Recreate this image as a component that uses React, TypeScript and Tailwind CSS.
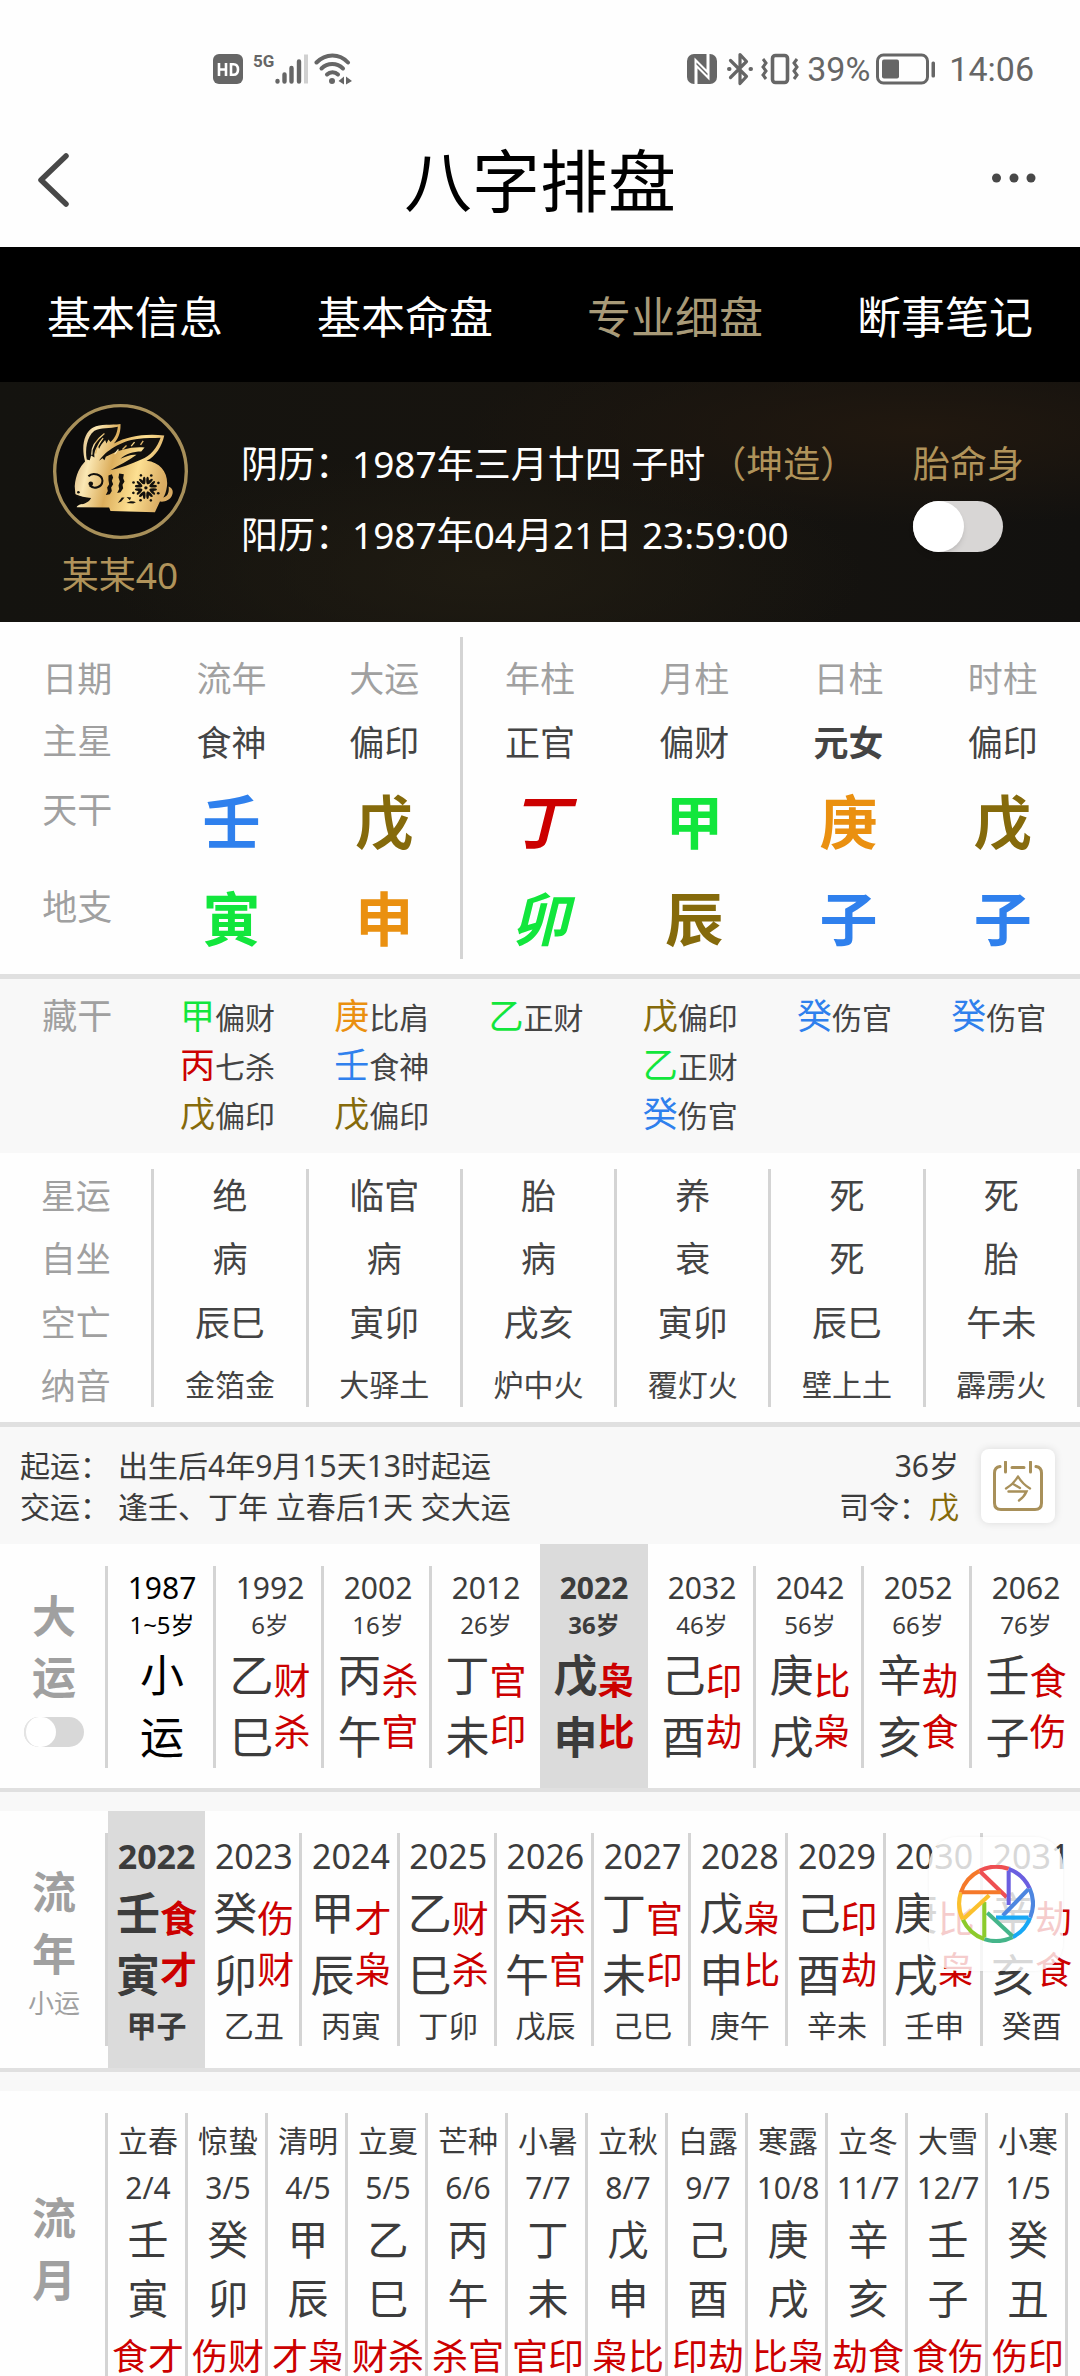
import React, { useState } from "react";

const BLUE = "text-[#2f80ed]";
const GREEN = "text-[#12e63c]";
const BROWN = "text-[#856a0b]";
const ORANGE = "text-[#ea9010]";
const RED = "text-[#cc0000]";

type Glyph = { c: string; color: string; italic?: boolean };

const pillars = ["流年", "大运", "年柱", "月柱", "日柱", "时柱"];
const mainStars = ["食神", "偏印", "正官", "偏财", "元女", "偏印"];
const stems: Glyph[] = [
  { c: "壬", color: BLUE },
  { c: "戊", color: BROWN },
  { c: "丁", color: RED, italic: true },
  { c: "甲", color: GREEN },
  { c: "庚", color: ORANGE },
  { c: "戊", color: BROWN },
];
const branches: Glyph[] = [
  { c: "寅", color: GREEN },
  { c: "申", color: ORANGE },
  { c: "卯", color: GREEN, italic: true },
  { c: "辰", color: BROWN },
  { c: "子", color: BLUE },
  { c: "子", color: BLUE },
];
const hidden: [string, string, string][][] = [
  [["甲", GREEN, "偏财"], ["丙", RED, "七杀"], ["戊", BROWN, "偏印"]],
  [["庚", ORANGE, "比肩"], ["壬", BLUE, "食神"], ["戊", BROWN, "偏印"]],
  [["乙", GREEN, "正财"]],
  [["戊", BROWN, "偏印"], ["乙", GREEN, "正财"], ["癸", BLUE, "伤官"]],
  [["癸", BLUE, "伤官"]],
  [["癸", BLUE, "伤官"]],
];
const details = [
  { label: "星运", cells: ["绝", "临官", "胎", "养", "死", "死"], cls: "h-[58px] pb-[5px] text-[35px]" },
  { label: "自坐", cells: ["病", "病", "病", "衰", "死", "胎"], cls: "h-[63px] text-[35px]" },
  { label: "空亡", cells: ["辰巳", "寅卯", "戌亥", "寅卯", "辰巳", "午未"], cls: "h-[64px] text-[35px]" },
  { label: "纳音", cells: ["金箔金", "大驿土", "炉中火", "覆灯火", "壁上土", "霹雳火"], cls: "h-[53px] pt-[9px] text-[30px]" },
];

const decades = [
  ["1992", "6岁", "乙巳", "财杀"],
  ["2002", "16岁", "丙午", "杀官"],
  ["2012", "26岁", "丁未", "官印"],
  ["2022", "36岁", "戊申", "枭比"],
  ["2032", "46岁", "己酉", "印劫"],
  ["2042", "56岁", "庚戌", "比枭"],
  ["2052", "66岁", "辛亥", "劫食"],
  ["2062", "76岁", "壬子", "食伤"],
];
const years = [
  ["2022", "壬寅", "食才", "甲子"],
  ["2023", "癸卯", "伤财", "乙丑"],
  ["2024", "甲辰", "才枭", "丙寅"],
  ["2025", "乙巳", "财杀", "丁卯"],
  ["2026", "丙午", "杀官", "戊辰"],
  ["2027", "丁未", "官印", "己巳"],
  ["2028", "戊申", "枭比", "庚午"],
  ["2029", "己酉", "印劫", "辛未"],
  ["2030", "庚戌", "比枭", "壬申"],
  ["2031", "辛亥", "劫食", "癸酉"],
];
const months = [
  ["立春", "2/4", "壬", "寅", "食才"],
  ["惊蛰", "3/5", "癸", "卯", "伤财"],
  ["清明", "4/5", "甲", "辰", "才枭"],
  ["立夏", "5/5", "乙", "巳", "财杀"],
  ["芒种", "6/6", "丙", "午", "杀官"],
  ["小暑", "7/7", "丁", "未", "官印"],
  ["立秋", "8/7", "戊", "申", "枭比"],
  ["白露", "9/7", "己", "酉", "印劫"],
  ["寒露", "10/8", "庚", "戌", "比枭"],
  ["立冬", "11/7", "辛", "亥", "劫食"],
  ["大雪", "12/7", "壬", "子", "食伤"],
  ["小寒", "1/5", "癸", "丑", "伤印"],
];

function StatusBar() {
  return (
    <div className="flex h-[120px] items-center justify-between pt-[18px] pr-[46px] pl-[213px] text-[#666]">
      <div className="flex items-center">
        <svg width="30" height="30" viewBox="0 0 30 30" aria-hidden="true">
          <rect width="30" height="30" rx="6" fill="#666" />
          <path d="M6 9v13M13 9v13M6 15.500h7M18 9v13M18 10.200h2.500c3 0 4.500 2 4.500 5.300s-1.500 5.300-4.500 5.300H18" fill="none" stroke="#fff" strokeWidth="2.600" />
        </svg>
        <span className="mb-4 ml-[10px] font-[Roboto] text-[17px] leading-none font-bold">5G</span>
        <svg width="34" height="32" viewBox="0 0 34 32" aria-hidden="true" fill="none" strokeLinecap="round" strokeWidth="4.400">
          <path d="M3.500 28.500v-.5M10.500 28.500v-7M17.500 28.500v-13.500M25 28.500v-20" stroke="#666" />
          <path d="M32 30.500v-29" stroke="#d0d0d0" strokeWidth="4" strokeLinecap="butt" />
        </svg>
        <svg className="ml-1.5" width="38" height="32" viewBox="0 0 38 32" aria-hidden="true" fill="none" stroke="#666" strokeLinecap="round">
          <path d="M2.500 9.500C11.500 0 25.500 0 34 9.500" strokeWidth="4" />
          <path d="M7.500 15.500c6-6 15.500-6 21.500 0" strokeWidth="4" />
          <path d="M13 21.500c3-3 8-3 11 0" strokeWidth="4" />
          <circle cx="18" cy="28" r="3" fill="#666" stroke="none" />
          <path d="M30 23.500l-5.500 4.500 5.500 3.500zM32 23.500l6 4.500-6 3.500z" fill="#666" stroke="none" />
        </svg>
      </div>
      <div className="flex items-center">
        <svg width="30" height="30" viewBox="0 0 30 30" aria-hidden="true">
          <rect width="30" height="30" rx="7" fill="#666" />
          <path d="M8.500 30V6l12 12V0M21.500 0v24L9.500 12v18" fill="none" stroke="#fff" strokeWidth="2" />
        </svg>
        <svg className="ml-[10px]" width="26" height="34" viewBox="0 0 26 34" aria-hidden="true" fill="none" stroke="#666" strokeWidth="3.200" strokeLinecap="round" strokeLinejoin="round">
          <path d="M3.500 8.500l16 16-6.500 7V2.500l6.500 7-16 16" />
          <path d="M2 17h.5M23.500 17h.5" strokeWidth="4" />
        </svg>
        <svg className="ml-2" width="38" height="32" viewBox="0 0 38 32" aria-hidden="true" fill="none" stroke="#666">
          <rect x="11.500" y="2.500" width="15" height="27" rx="3" strokeWidth="3.600" />
          <path d="M2 6l3 4-3 4 3 4-3 4 3 4M36 6l-3 4 3 4-3 4 3 4-3 4" strokeWidth="3" />
        </svg>
        <span className="ml-[8px] font-[Roboto] text-[34px] leading-none">39%</span>
        <svg className="ml-[6px]" width="60" height="32" viewBox="0 0 60 32" aria-hidden="true">
          <rect x="1.500" y="2" width="50" height="28" rx="6" fill="none" stroke="#666" strokeWidth="3" />
          <rect x="6" y="6.500" width="17" height="19" rx="2" fill="#666" />
          <rect x="55.500" y="8.500" width="3.500" height="16" rx="1.500" fill="#666" />
        </svg>
        <span className="ml-[13px] font-[Roboto] text-[34px] leading-none">14:06</span>
      </div>
    </div>
  );
}

function Rabbit() {
  return (
    <svg width="135" height="135" viewBox="66 42 404 404" role="img" aria-label="生肖兔">
      <defs>
        <linearGradient id="gold" x1="0" y1="0" x2="1" y2="0.200">
          <stop offset="0" stopColor="#c9a06a" />
          <stop offset="0.220" stopColor="#fbe8b4" />
          <stop offset="0.450" stopColor="#dcae5c" />
          <stop offset="0.720" stopColor="#fde092" />
          <stop offset="1" stopColor="#d9ab62" />
        </linearGradient>
      </defs>
      <circle cx="268" cy="244" r="197" fill="#0c0b0a" stroke="#a8905a" strokeWidth="10" />
      <path
        d="M131 288C134 254 146 230 162 214C150 170 158 128 186 112C208 101 240 106 268 102C269 126 262 146 248 160C290 138 340 130 399 136C392 168 374 198 346 212C388 216 412 250 407 288C405 304 400 316 396 322C410 318 414 306 412 289C424 294 427 304 422 316C416 330 400 336 386 334L371 366L238 362L234 352L137 351C138 345 148 343 156 340C166 336 176 328 178 323C158 324 142 318 133 312Z"
        fill="url(#gold)"
      />
      <g fill="#12100d">
        <path d="M167 208C162 180 166 140 190 122C208 112 238 116 260 110C258 130 250 146 238 156L232 148L226 160L222 150C214 160 208 166 204 176L200 168C192 178 188 190 190 202L180 196L176 210Z" />
        <path d="M204 212C222 184 270 152 318 147C346 143 368 144 388 143C378 172 358 198 330 208C300 222 268 234 238 240C262 226 292 212 316 194C300 192 286 198 268 206C284 190 306 184 330 184L340 172C306 168 262 178 224 200L220 210L214 204Z" />
        <path d="M131 312C146 318 164 322 180 323C176 332 164 340 152 342Z" />
        <path d="M232 256l10-4 4 10-4 10 4 10-6 10 2 10-6 10-12 2 6-12-2-10 6-10-2-12zM264 250l14 2-2 12 4 10-6 10 2 10-8 12-10 2 6-12-2-10 4-12-4-12z" />
        <path d="M260 338l12-16 8 0-10 12zM286 338c10-6 20-6 28-2l-8 4zM286 320l14 2-4 8z" />
      </g>
      <g fill="none" stroke="url(#gold)" strokeWidth="4">
        <path d="M182 194C180 172 194 150 220 130M194 190C196 172 206 156 216 144" />
        <path d="M250 192l12-14M274 178l12-12M300 168l10-12M328 164l8-12" />
      </g>
      <path d="M172 258C186 244 214 254 214 272C213 292 188 298 176 286" fill="none" stroke="#12100d" strokeWidth="6" />
      <circle cx="179" cy="281" r="7" fill="#12100d" />
      <circle cx="142" cy="306" r="4" fill="#12100d" />
      <g fill="#12100d">
        {[0, 45, 90, 135, 180, 225, 270, 315].map((a) => (
          <g key={a} transform={`rotate(${a} 344 293)`}>
            <ellipse cx="339" cy="271" rx="4" ry="11" />
            <ellipse cx="349" cy="271" rx="4" ry="11" />
            <circle cx="360" cy="256" r="4" />
          </g>
        ))}
      </g>
      <circle cx="344" cy="293" r="5" fill="#12100d" />
    </svg>
  );
}

function Hero() {
  return (
    <section className="flex h-[240px] items-start bg-[radial-gradient(ellipse_at_85%_20%,#21180f_0%,transparent_35%),radial-gradient(ellipse_at_45%_80%,#1f1b12_0%,transparent_45%),linear-gradient(90deg,#14130f,#17140f_50%,#12110f)] text-[37px] leading-[48px] text-white">
      <div className="flex w-[240px] shrink-0 flex-col items-center pt-[22px] text-[#b0935a]">
        <Rabbit />
        <span className="mt-3">某某40</span>
      </div>
      <div className="grow pt-[46px] pl-px leading-[71px] whitespace-nowrap">
        <p>
          阴历：1987年三月廿四 子时<span className="ml-1 text-[#b0935a]">（坤造）</span>
        </p>
        <p>阳历：1987年04月21日 23:59:00</p>
      </div>
      <label className="mr-[56px] flex flex-col items-start pt-[58px] text-[#b0935a]">
        胎命身
        <input
          type="checkbox"
          role="switch"
          className="mt-[13px] h-[51px] w-[90px] appearance-none rounded-full bg-[#d8d6d5] before:block before:size-[51px] before:rounded-full before:bg-white before:shadow-md checked:bg-[#b0935a] checked:before:ml-auto"
        />
      </label>
    </section>
  );
}

function PillarTable() {
  const line = (i: number) => (i === 1 ? "border-r-[3px] border-[#d4d4d4]" : "");
  const label = "font-normal text-[#a0a0a0]";
  return (
    <div className="pt-[15px] pb-[15px]">
      <table className="w-full table-fixed border-separate border-spacing-0 text-center text-[35px] leading-none text-[#444]">
        <thead>
          <tr className={label}>
            <th scope="col" className="h-[74px] pt-2 font-normal">日期</th>
            {pillars.map((p, i) => (
              <th key={i} scope="col" className={`h-[74px] pt-2 font-normal ${line(i)}`}>{p}</th>
            ))}
          </tr>
        </thead>
        <tbody>
          <tr>
            <th scope="row" className={`h-[62px] pb-[3px] ${label}`}>主星</th>
            {mainStars.map((s, i) => (
              <td key={i} className={`h-[62px] ${line(i)} ${i === 4 ? "font-bold" : ""}`}>{s}</td>
            ))}
          </tr>
          <tr>
            <th scope="row" className={`h-[97px] pb-6 ${label}`}>天干</th>
            {stems.map((g, i) => (
              <td key={i} className={`h-[97px] text-[58px] font-bold ${g.color} ${g.italic ? "italic" : ""} ${line(i)}`}>{g.c}</td>
            ))}
          </tr>
          <tr>
            <th scope="row" className={`h-[89px] pb-4 ${label}`}>地支</th>
            {branches.map((g, i) => (
              <td key={i} className={`h-[89px] pt-2 text-[58px] font-bold ${g.color} ${g.italic ? "italic" : ""} ${line(i)}`}>{g.c}</td>
            ))}
          </tr>
        </tbody>
      </table>
    </div>
  );
}

function HiddenStems() {
  return (
    <div className="border-t-[5px] border-[#e0e0e0] bg-[#f8f8f8] pt-3 pb-[15px]">
      <table className="w-full table-fixed border-separate border-spacing-0 text-center leading-[49px] text-[#444]">
        <tbody>
          <tr className="align-top">
            <th scope="row" className="text-[35px] font-normal text-[#a0a0a0]">藏干</th>
            {hidden.map((list, i) => (
              <td key={i} className="pr-2">
                {list.map(([c, color, name]) => (
                  <div key={c} className="flex h-[49px] items-baseline justify-center text-[30px]">
                    <span className={`text-[35px] ${color}`}>{c}</span>
                    {name}
                  </div>
                ))}
              </td>
            ))}
          </tr>
        </tbody>
      </table>
    </div>
  );
}

function DetailTable() {
  return (
    <div className="pt-4 pb-[15px]">
      <table className="w-full table-fixed border-separate border-spacing-0 text-center leading-none text-[#444]">
        <tbody>
          {details.map((r) => (
            <tr key={r.label}>
              <th scope="row" className={`border-r-[3px] border-[#d4d4d4] font-normal text-[#a0a0a0] ${r.cls} !text-[35px]`}>{r.label}</th>
              {r.cells.map((c, i) => (
                <td key={i} className={`border-r-[3px] border-[#d4d4d4] ${r.cls}`}>{c}</td>
              ))}
            </tr>
          ))}
        </tbody>
      </table>
    </div>
  );
}

function LuckStart() {
  return (
    <section className="flex h-[122px] items-center border-t-[5px] border-[#e0e0e0] bg-[#f8f8f8] pr-[25px] pl-[20px] text-[30px] leading-[41px] text-[#3c3c3c]">
      <div className="grow whitespace-nowrap">
        <p>起运：<span className="ml-2">出生后4年9月15天13时起运</span></p>
        <p>交运：<span className="ml-2">逢壬、丁年 立春后1天 交大运</span></p>
      </div>
      <div className="text-right">
        <p>36岁</p>
        <p>司令：<span className={BROWN}>戊</span></p>
      </div>
      <button type="button" aria-label="今" className="ml-[22px] grid size-[74px] place-items-center rounded-lg bg-white text-[#a8905a] shadow-[0_0_8px_rgba(0,0,0,0.12)]">
        <svg width="50" height="50" viewBox="0 0 50 50" fill="none" stroke="currentColor" strokeWidth="3" strokeLinecap="round" aria-hidden="true">
          <path d="M7 5.500C3.500 6 1.500 8 1.500 12v30c0 4.500 2 6.500 6.500 6.500h34c4.500 0 6.500-2 6.500-6.500V12c0-4-2-6-5.500-6.500M19 6.500h12M12.500 1v10M37.500 1v10" />
          <path d="M25 15.500c-3 5-7 9-12 12M25 15.500c3 5 7 9 12 12M21 23.500l6 3.500M15.500 30.500h18c-1.500 3.500-4 6.500-7.500 9" strokeWidth="2.400" />
        </svg>
      </button>
    </section>
  );
}

function GanZhi({ pair, gods }: { pair: string; gods: string }) {
  return (
    <span className="flex items-center justify-center">
      <span className="w-[44px] text-[44px] leading-[62px]">{pair}</span>
      <span className={`w-[37px] text-[37px] leading-[51px] ${RED}`}>{gods}</span>
    </span>
  );
}

function columnClass(selected: boolean, lined: boolean) {
  return `block border-r-[3px] pl-[3px] ${lined ? "border-[#d4d4d4]" : "border-transparent"} ${selected ? "font-bold" : ""}`;
}

function Decades() {
  const [sel, setSel] = useState(3);
  return (
    <section className="grid grid-cols-10 text-center text-[#3c3c3c]">
      <div className="pt-[22px] pb-5">
        <div className="flex h-full flex-col items-center border-r-[3px] border-[#d4d4d4] pt-5 pl-[3px]">
          <h2 className="w-[44px] text-[44px] leading-[61px] font-bold text-[#a0a0a0]">大运</h2>
          <input
            type="checkbox"
            role="switch"
            aria-label="大运"
            className="mt-[9px] h-[30px] w-[60px] appearance-none rounded-full bg-[#d8d8d8] before:block before:h-[30px] before:w-[32px] before:rounded-full before:border-l-2 before:border-[#e4e4e4] before:bg-white checked:bg-[#a8905a] checked:before:ml-auto"
          />
        </div>
      </div>
      <button type="button" className="flex flex-col pt-[22px] pb-5 text-black">
        <span className="flex w-full grow flex-col items-center border-r-[3px] border-[#d4d4d4] pl-[3px]">
          <span className="text-[30px] leading-[44px]">1987</span>
          <span className="text-[24px] leading-[30px]">1~5岁</span>
          <span className="mt-1 w-[44px] text-[44px] leading-[62px]">小运</span>
        </span>
      </button>
      {decades.map(([year, age, pair, gods], i) => (
        <button key={year} type="button" onClick={() => setSel(i)} className={`pt-[22px] pb-5 ${sel === i ? "bg-[#dbdbdb]" : ""}`}>
          <span className={columnClass(sel === i, i !== sel && i !== sel - 1 && i < decades.length - 1)}>
            <span className="block text-[30px] leading-[44px]">{year}</span>
            <span className="mb-1 block text-[24px] leading-[30px]">{age}</span>
            <GanZhi pair={pair} gods={gods} />
          </span>
        </button>
      ))}
    </section>
  );
}

function Shutter() {
  const blades = [
    ["M-17-34A38 38 0 0 1 13-36", "M-16-33L11-7", "#ee4f52"],
    ["M13-36A38 38 0 0 1 34.500-16", "M13-34V1", "#6b5fe0"],
    ["M34.500-16A38 38 0 0 1 35 14", "M33-15L7 12", "#4d86e0"],
    ["M35 14A38 38 0 0 1 17 34", "M33 14H0", "#18a8f5"],
    ["M17 34A38 38 0 0 1-12 36", "M17 33L-9 9", "#45b58a"],
    ["M-12 36A38 38 0 0 1-34 16", "M-12 34V-2", "#8ccb2c"],
    ["M-34 16A38 38 0 0 1-36-12", "M-33 15L-7-9", "#fbc02d"],
    ["M-36-12A38 38 0 0 1-17-34", "M-35-12H5", "#f5792a"],
  ];
  return (
    <svg width="78" height="78" viewBox="-40 -40 80 80" fill="none" strokeWidth="4.200" aria-hidden="true">
      {blades.map(([arc, blade, color]) => (
        <g key={color} stroke={color}>
          <path d={arc} />
          <path d={blade} />
        </g>
      ))}
    </svg>
  );
}

function Years() {
  const [sel, setSel] = useState(0);
  return (
    <section className="relative flex border-t-[4px] border-[#e0e0e0] text-center text-[#3c3c3c]">
      <div className="flex w-full border-t-[19px] border-[#f8f8f8]">
        <div className="w-1/10 shrink-0 py-[22px]">
          <div className="flex h-full flex-col items-center border-r-[3px] border-[#d4d4d4] pt-7 pl-[3px] text-[#a0a0a0]">
            <h2 className="w-[44px] text-[44px] leading-[62px] font-bold">流年</h2>
            <span className="text-[26px] leading-9">小运</span>
          </div>
        </div>
        <div className="grid grow grid-cols-10">
          {years.map(([year, pair, gods, small], i) => (
            <button key={year} type="button" onClick={() => setSel(i)} className={`py-[22px] ${sel === i ? "bg-[#dbdbdb]" : ""}`}>
              <span className={columnClass(sel === i, i !== sel && i !== sel - 1 && i < years.length - 1)}>
                <span className="mb-[3px] block text-[34px] leading-[46px]">{year}</span>
                <GanZhi pair={pair} gods={gods} />
                <span className="block text-[30px] leading-[40px]">{small}</span>
              </span>
            </button>
          ))}
        </div>
      </div>
      <button type="button" aria-label="快门" className="absolute top-[45px] right-[17px] grid size-[134px] place-items-center rounded-[28px] bg-white/80 shadow-[0_0_3px_rgba(0,0,0,0.06)]">
        <Shutter />
      </button>
    </section>
  );
}

function Months() {
  return (
    <section className="border-t-[4px] border-[#e0e0e0] text-center text-[#3c3c3c]">
      <div className="flex border-t-[19px] border-[#f8f8f8] pt-[22px] pr-3">
        <div className="flex w-[108px] shrink-0 flex-col items-center border-r-[3px] border-[#d4d4d4] pt-[74px] pl-[3px]">
          <h2 className="w-[44px] text-[44px] leading-[62px] font-bold text-[#a0a0a0]">流月</h2>
        </div>
        <div className="grid grow grid-cols-12">
          {months.map(([term, date, stem, branch, gods]) => (
            <button key={term} type="button" className="block border-r-[3px] border-[#d4d4d4] pt-1 pl-[3px] whitespace-nowrap">
              <span className="block text-[30px] leading-[48px]">{term}</span>
              <span className="block text-[30px] leading-[46px]">{date}</span>
              <span className="block text-[41px] leading-[57px]">{stem}</span>
              <span className="block text-[41px] leading-[60px]">{branch}</span>
              <span className={`mt-[9px] block text-[36px] leading-[39px] ${RED}`}>{gods}</span>
            </button>
          ))}
        </div>
      </div>
    </section>
  );
}

export default function App() {
  return (
    <main className="min-h-screen bg-[#fefefe] font-['Noto_Sans','Noto_Sans_CJK_SC',sans-serif]" lang="zh-CN">
      <StatusBar />
      <header className="flex h-[127px] items-center justify-between px-[38px] pb-[5px]">
        <button type="button" aria-label="返回">
          <svg width="50" height="56" viewBox="0 0 50 56" fill="none" stroke="#484848" strokeWidth="5.500" strokeLinecap="round" strokeLinejoin="round" aria-hidden="true">
            <path d="M28 3L3 27l25 24" />
          </svg>
        </button>
        <h1 className="text-[68px] leading-none text-black">八字排盘</h1>
        <button type="button" aria-label="更多">
          <svg width="50" height="20" viewBox="0 0 50 20" fill="#484848" aria-hidden="true">
            <circle cx="4.500" cy="7" r="4.500" />
            <circle cx="22" cy="7" r="4.500" />
            <circle cx="39" cy="7" r="4.500" />
          </svg>
        </button>
      </header>
      <nav className="grid h-[135px] grid-cols-4 items-center bg-black pt-1 text-center text-[44px] text-white">
        <a href="#info">基本信息</a>
        <a href="#chart">基本命盘</a>
        <a href="#detail" aria-current="page" className="text-[#a89a78]">专业细盘</a>
        <a href="#notes">断事笔记</a>
      </nav>
      <Hero />
      <PillarTable />
      <HiddenStems />
      <DetailTable />
      <LuckStart />
      <Decades />
      <Years />
      <Months />
    </main>
  );
}
